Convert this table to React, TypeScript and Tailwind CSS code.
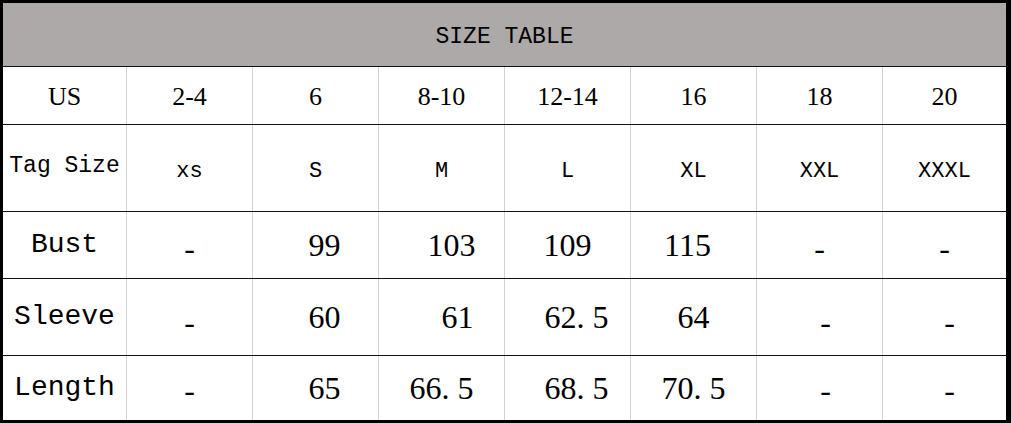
const mono = { fontFamily: '"Liberation Mono", "DejaVu Sans Mono", monospace' };

type Cell = { text: string; cls?: string };

const serifCls = "font-['Liberation_Serif',serif]";
const monoCls = "font-['Liberation_Mono',monospace]";

const usRow = ["US", "2-4", "6", "8-10", "12-14", "16", "18", "20"];
const tagRow = ["xs", "S", "M", "L", "XL", "XXL", "XXXL"];

const measureRows: { label: string; height: string; cells: Cell[] }[] = [
  {
    label: "Bust",
    height: "h-[67px]",
    cells: [
      { text: "-", cls: "pt-[6px]" },
      { text: "99", cls: "pl-[18px]" },
      { text: "103", cls: "pl-[20px]" },
      { text: "109" },
      { text: "115", cls: "pr-[12px]" },
      { text: "-", cls: "pt-[6px]" },
      { text: "-", cls: "pt-[6px]" },
    ],
  },
  {
    label: "Sleeve",
    height: "h-[77px]",
    cells: [
      { text: "-", cls: "pt-[10px]" },
      { text: "60", cls: "pl-[18px]" },
      { text: "61", cls: "pl-[32px]" },
      { text: "62. 5", cls: "pl-[18px]" },
      { text: "64" },
      { text: "-", cls: "pt-[10px] pl-[12px]" },
      { text: "-", cls: "pt-[10px] pl-[10px]" },
    ],
  },
  {
    label: "Length",
    height: "h-[65px]",
    cells: [
      { text: "-", cls: "pt-[4px]" },
      { text: "65", cls: "pl-[18px]" },
      { text: "66. 5" },
      { text: "68. 5", cls: "pl-[18px]" },
      { text: "70. 5" },
      { text: "-", cls: "pt-[4px] pl-[12px]" },
      { text: "-", cls: "pt-[4px] pl-[10px]" },
    ],
  },
];

const gridCls =
  "grid grid-cols-[123px_126px_126px_126px_126px_126px_126px_124px] border-t border-[#111111]";

export default function App() {
  return (
    <div className="w-[1011px] h-[423px] bg-white">
      <div className="w-[1011px] h-[423px] flex flex-col border-l-[3px] border-t-[3px] border-r-[5px] border-b-[3px] border-black text-black">
        {/* title */}
        <div className="h-[63px] bg-[#aca9a8] flex items-center justify-center pt-[5px]">
          <span className="text-[23px] leading-none" style={mono}>
            SIZE TABLE
          </span>
        </div>

        {/* US sizes */}
        <div className={`${gridCls} h-[58px]`}>
          {usRow.map((t, i) => (
            <div
              key={t}
              className={`flex items-center justify-center pt-[2px] text-[26px] leading-none ${serifCls} ${
                i > 0 ? "border-l border-[#d2d2d2]" : ""
              }`}
            >
              {t}
            </div>
          ))}
        </div>

        {/* tag sizes */}
        <div className={`${gridCls} h-[87px]`}>
          <div className={`flex items-center justify-center pb-[4px] text-[23px] leading-none ${monoCls}`}>
            Tag Size
          </div>
          {tagRow.map((t) => (
            <div
              key={t}
              className={`flex items-center justify-center pt-[8px] text-[22px] leading-none border-l border-[#d2d2d2] ${monoCls}`}
            >
              {t}
            </div>
          ))}
        </div>

        {measureRows.map((row) => (
          <div key={row.label} className={`${gridCls} ${row.height}`}>
            <div className={`flex items-center justify-center text-[28px] leading-none ${monoCls}`}>
              {row.label}
            </div>
            {row.cells.map((c, i) => (
              <div
                key={i}
                className={`flex items-center justify-center text-[32px] leading-none border-l border-[#d2d2d2] ${serifCls} ${
                  c.cls ?? ""
                }`}
              >
                {c.text}
              </div>
            ))}
          </div>
        ))}
      </div>
    </div>
  );
}
